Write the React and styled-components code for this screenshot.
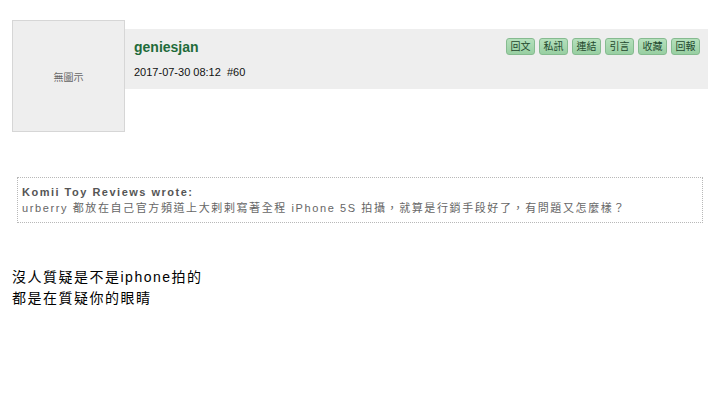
import React from 'react';
import styled, { createGlobalStyle } from 'styled-components';

const GlobalStyle = createGlobalStyle`
    body {
        margin: 0;
        background: #ffffff;
        font-family: "Liberation Sans", Arial, "Noto Sans CJK TC", sans-serif;
    }
`;

const Page = styled.div`
    padding: 20px 12px 0 12px;
`;

const PostHead = styled.div`
    display: flex;
    align-items: flex-start;
`;

const Avatar = styled.div`
    width: 111px;
    height: 110px;
    flex: none;
    background-color: #eeeeee;
    border: 1px solid #d6d6d6;
    display: flex;
    justify-content: center;
    align-items: center;
    font-size: 10px;
    color: #666666;
`;

const InfoBar = styled.div`
    flex: 1;
    margin-top: 9px;
    height: 60px;
    background-color: #eeeeee;
    display: flex;
    justify-content: space-between;
    padding: 0 8px 0 9px;
    box-sizing: border-box;
`;

const Meta = styled.div`
    display: flex;
    flex-direction: column;
    padding-top: 10px;
`;

const UserName = styled.div`
    font-size: 14px;
    font-weight: bold;
    color: #1f6b3a;
    line-height: 17px;
`;

const PostDate = styled.div`
    margin-top: 9px;
    font-size: 11px;
    color: #111111;
    line-height: 14px;
    white-space: pre;
`;

const Actions = styled.div`
    display: flex;
    gap: 4px;
    padding-top: 9px;
`;

const ActionButton = styled.button`
    width: 29px;
    height: 17px;
    padding: 0;
    font-family: "Liberation Sans", "Noto Sans CJK TC", sans-serif;
    font-size: 10px;
    line-height: 15px;
    color: #24492e;
    background: linear-gradient(#b5e0bc, #98cfa2);
    border: 1px solid #86bb90;
    border-radius: 3px;
    cursor: pointer;
`;

const Quote = styled.div`
    margin: 45px 5px 0 5px;
    border: 1px dotted #b8b8b8;
    padding: 6px 4px 6px 4px;
    color: #666666;
    font-size: 11px;
    letter-spacing: 1.6px;
    line-height: 16px;
`;

const QuoteTitle = styled.div`
    font-weight: bold;
    color: #555555;
    letter-spacing: 1.5px;
`;

const Body = styled.div`
    margin-top: 44px;
    font-size: 14px;
    letter-spacing: 1.5px;
    line-height: 21px;
    color: #000000;
`;

const buttons = ['回文', '私訊', '連結', '引言', '收藏', '回報'];

function App() {
    return (
        <Page>
            <GlobalStyle />
            <PostHead>
                <Avatar>無圖示</Avatar>
                <InfoBar>
                    <Meta>
                        <UserName>geniesjan</UserName>
                        <PostDate>{'2017-07-30 08:12  #60'}</PostDate>
                    </Meta>
                    <Actions>
                        {buttons.map((b) => (
                            <ActionButton key={b}>{b}</ActionButton>
                        ))}
                    </Actions>
                </InfoBar>
            </PostHead>
            <Quote>
                <QuoteTitle>Komii Toy Reviews wrote:</QuoteTitle>
                urberry 都放在自己官方頻道上大剌剌寫著全程 iPhone 5S 拍攝，就算是行銷手段好了，有問題又怎麼樣？
            </Quote>
            <Body>
                沒人質疑是不是iphone拍的
                <br />
                都是在質疑你的眼睛
            </Body>
        </Page>
    );
}

export default App;
